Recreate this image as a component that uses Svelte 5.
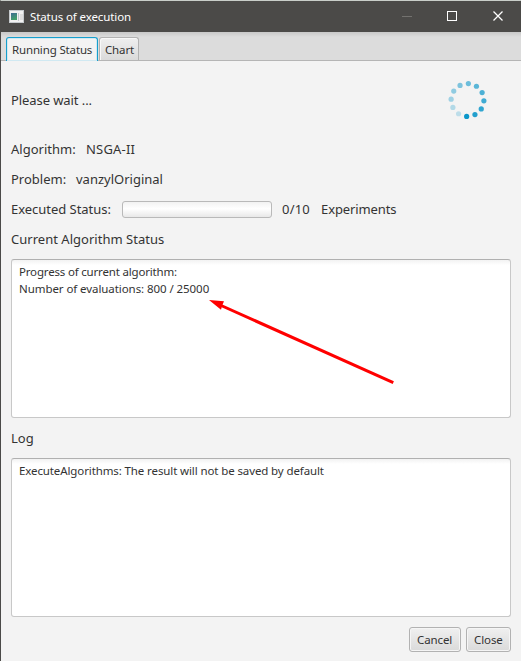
<script>
  // Opacity of each spinner dot, clockwise from the top.
  const dots = [0.58, 0.66, 0.72, 0.78, 0.84, 0.9, 1, 0.23, 0.28, 0.36, 0.43, 0.51].map((opacity, i) => {
    const angle = ((i * 30 + 3) * Math.PI) / 180;
    return { opacity, x: 19.5 + 16.4 * Math.sin(angle), y: 20 - 16.4 * Math.cos(angle) };
  });
</script>

<div class="window">
  <header class="titlebar">
    <svg class="app" width="15" height="13" viewBox="0 0 15 13">
      <defs>
        <linearGradient id="pane" x1="0" y1="0" x2="0.4" y2="1">
          <stop offset="0" stop-color="#3f6c94" /><stop offset="1" stop-color="#42a069" />
        </linearGradient>
      </defs>
      <rect x="0.5" y="0.5" width="14" height="12" fill="#f1f1f1" stroke="#c6cacd" />
      <rect x="2" y="3" width="6" height="7" fill="url(#pane)" />
      <rect x="9" y="3" width="1" height="8" fill="#c3c8cc" />
      <rect x="11" y="4" width="3" height="6" fill="#dedede" />
    </svg>
    <span class="title">Status of execution</span>
    <svg class="controls" width="138" height="31" viewBox="0 0 138 31">
      <path d="M19 15.500h10" stroke="#73726f" />
      <rect x="64.5" y="10.5" width="9" height="9" fill="none" stroke="#fff" />
      <path d="M110.500 10.500l9 9m0-9l-9 9" fill="none" stroke="#fff" stroke-width="1.25" />
    </svg>
  </header>

  <nav class="tabs">
    <div class="tab active"><span>Running Status</span></div>
    <div class="tab"><span>Chart</span></div>
  </nav>

  <main>
    <div class="wait">
      <span class="t-wait">Please wait ...</span>
      <svg width="40" height="40" viewBox="0 0 40 40">
        {#each dots as d}
          <circle cx={d.x} cy={d.y} r="2.6" fill="#0b96c9" opacity={d.opacity} />
        {/each}
      </svg>
    </div>
    <div class="row"><span class="t-alg">Algorithm:</span><span class="t-nsga">NSGA-II</span></div>
    <div class="row"><span class="t-prob">Problem:</span><span>vanzylOriginal</span></div>
    <div class="row">
      <span class="t-exec">Executed Status:</span>
      <div class="progress"></div>
      <span class="t-count">0/10</span><span class="t-exp">Experiments</span>
    </div>
    <div class="row"><span class="t-cur">Current Algorithm Status</span></div>
    <div class="area">
      <div><span class="t-line1">Progress of current algorithm:</span></div>
      <div><span class="t-line2">Number of evaluations: 800 / 25000</span></div>
    </div>
    <div class="row log"><span>Log</span></div>
    <div class="area">
      <div><span class="t-line3">ExecuteAlgorithms: The result will not be saved by default</span></div>
    </div>
    <footer>
      <button class="cancel"><span>Cancel</span></button>
      <button class="close"><span>Close</span></button>
    </footer>
  </main>

  <svg class="arrow" width="190" height="90" viewBox="0 0 190 90">
    <path d="M11 5L184.300 82.700" stroke="#f00" stroke-width="3" />
    <path d="M0 0L15 1.200L13.200 5.500L12 9.700z" fill="#f00" />
  </svg>
</div>

<style>
  :global(body) { margin: 0; }
  .window {
    position: relative;
    box-sizing: border-box;
    width: 521px;
    height: 661px;
    border-top: 1px solid #c9cec9;
    border-left: 1px solid #4b4a48;
    background: #f3f3f3;
    color: #333;
    font-family: "Noto Sans", "Open Sans", sans-serif;
    font-size: 13px;
    overflow: hidden;
  }
  span { display: inline-block; white-space: nowrap; }
  svg { flex: none; }
  .titlebar {
    display: flex;
    align-items: center;
    box-sizing: border-box;
    height: 31px;
    background: #4b4a48;
    color: #fff;
    font-size: 11.5px;
    letter-spacing: -0.1px;
  }
  .app { margin-left: 8px; }
  .title { margin-left: 6px; width: 110px; }
  .controls { margin-left: auto; }
  .tabs {
    display: flex;
    align-items: flex-end;
    gap: 1px;
    box-sizing: border-box;
    height: 29px;
    padding-left: 5px;
    background: linear-gradient(#c8c8c8, #dcdcdc 5px);
    border-bottom: 1px solid #b5b5b5;
    font-size: 11.5px;
    letter-spacing: -0.15px;
  }
  .tab {
    box-sizing: border-box;
    width: 40px;
    height: 23px;
    padding: 0 5px;
    border: 1px solid #b2b2b2;
    border-bottom: 0;
    border-radius: 3px 3px 0 0;
    background: linear-gradient(#efefef, #dadada);
    box-shadow: inset 1px 1px #f8f8f8;
    line-height: 24px;
  }
  .tab.active {
    width: 92px;
    height: 24px;
    margin-bottom: -1px;
    background: #f3f3f3;
    border-color: #169fcd;
    box-shadow: inset 0 0 0 1px #d0e9f2;
  }
  main { padding: 14px 10px 0; }
  .wait {
    display: flex;
    justify-content: space-between;
    align-items: center;
    height: 50px;
    padding-right: 23px;
    margin-bottom: 9px;
  }
  .row { display: flex; align-items: center; height: 30px; }
  .t-wait { letter-spacing: -0.08px; }
  .t-alg { width: 75px; }
  .t-nsga { letter-spacing: 0.2px; }
  .t-prob { width: 65px; }
  .t-exec { width: 111px; letter-spacing: -0.03px; }
  .t-count { width: 39px; letter-spacing: 0.2px; }
  .t-exp { letter-spacing: -0.1px; }
  .t-cur { letter-spacing: 0.02px; }
  .t-line1 { letter-spacing: -0.18px; }
  .t-line2 { letter-spacing: -0.07px; }
  .t-line3 { letter-spacing: -0.11px; }
  .progress {
    box-sizing: border-box;
    width: 150px;
    height: 17px;
    margin-right: 10px;
    border: 1px solid #b9b9b9;
    border-radius: 3px;
    background: linear-gradient(#f2f2f2, #fff 45%, #e8e8e8);
  }
  .area {
    box-sizing: border-box;
    width: 500px;
    height: 159px;
    margin-top: 5px;
    padding: 3px 7px;
    border: 1px solid #c8c8c8;
    border-top-color: #b0b0b0;
    border-radius: 3px;
    background: linear-gradient(#f2f2f2, #fff 5px);
    font-size: 11.5px;
    line-height: 17px;
  }
  .log { margin-top: 5px; }
  footer {
    display: flex;
    justify-content: flex-end;
    gap: 5px;
    margin-top: 10px;
  }
  button {
    box-sizing: border-box;
    height: 25px;
    padding: 0 7px;
    border: 1px solid #b2b2b2;
    border-radius: 3px;
    background: linear-gradient(#f0f0f0, #dadada);
    box-shadow: inset 0 0 0 1px #f5f5f5;
    color: #333;
    font: 11.5px/23px "Noto Sans", "Open Sans", sans-serif;
    letter-spacing: -0.1px;
    text-align: left;
  }
  .cancel { width: 52px; }
  .close { width: 45px; }
  .arrow { position: absolute; left: 208px; top: 299px; }
</style>
